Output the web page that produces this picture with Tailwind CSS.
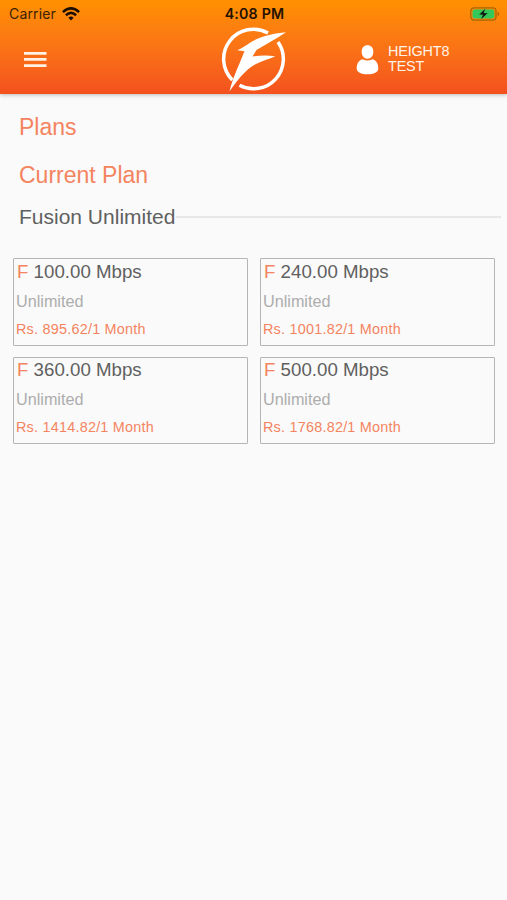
<!DOCTYPE html>
<html lang="en">
<head>
<meta charset="utf-8">
<title>Plans</title>
<script src="https://cdn.jsdelivr.net/npm/@tailwindcss/browser@4"></script>
</head>
<body class="h-[900px] w-[507px] overflow-hidden bg-[#fafafa] font-['Liberation_Sans',Arial,sans-serif] text-[#606060]">
<header class="flex h-[94px] flex-col bg-linear-to-b from-[#ff9100] to-[#f4511e] shadow-[0_1px_4px_rgba(0,0,0,0.25)]">
  <div class="grid h-[27px] shrink-0 grid-cols-3 items-center pr-[7px] pl-[9px] font-['Inter',sans-serif] text-[#3b2105]">
    <div class="flex items-center gap-[6px]">
      <span class="text-[14px] leading-[26px] tracking-[0.15px]">Carrier</span>
      <svg class="h-[14px] w-[18px]" viewBox="0 0 18 14" fill="none" stroke="#1c0f00" stroke-width="2.5"><path d="M.9 5.1Q9-2.3 17.1 5.1M3.9 8.2q5.1-4.6 10.2 0"/><path d="M6.4 10.7q2.6-2.2 5.2 0L9 13.4z" fill="#1c0f00" stroke="none"/></svg>
    </div>
    <div class="text-center text-[14.2px] leading-[26px] font-semibold tracking-[0.2px] text-[#241200]">4:08 PM</div>
    <svg class="h-[14px] w-[30px] justify-self-end" viewBox="0 0 30 14"><rect x=".8" y=".8" width="25.2" height="12.4" rx="3.4" fill="none" stroke="#a86500" stroke-width="1.3"/><rect x="2.5" y="2.4" width="21.8" height="9.2" rx="2" fill="#34c759"/><path d="M27.6 4.6q3.4 2.4 0 4.8z" fill="#a86500"/><path d="M15.3 1.5 9 7.7h3.8l-1.8 4.9 6.800-6.500h-4z" fill="#111" stroke="#34c759" stroke-width=".3"/></svg>
  </div>
  <div class="grid flex-1 grid-cols-[221px_135px_1fr] items-start">
    <svg class="mt-[24px] ml-[24px] h-[17px] w-[23px]" viewBox="0 0 23 17" fill="#fff2e4"><path d="M0 1h22.5v2.7H0zM0 7.1h22.5v2.7H0zM0 13.2h22.5v2.7H0z"/></svg>
    <svg class="h-[66px] w-[66px]" viewBox="0 0 66 66" fill="#fff"><path d="M47 6A29.8 29.8 0 0 0 11.3 53" fill="none" stroke="#fff" stroke-width="3.5"/><path d="M57 15A29.8 29.8 0 0 1 18.5 58.3" fill="none" stroke="#fff" stroke-width="3.5"/><path d="M65 5.2C51 6.5 36 10 26.5 17.5C22.5 20.2 19 22 16.3 23.300L23.500 24.200C18 38 12.500 49 8.400 64.400C16 54 24 43 34 37.500C40.500 34 47 32.500 54.300 29.200C46.500 28.200 39.500 28.300 31.500 29.500L35.500 23C46 16.500 55 12 65 5.200z"/></svg>
    <div class="flex items-start gap-[9px] pt-[17px]">
      <svg class="mt-[1px] h-[30px] w-[23px]" viewBox="0 0 23 30" fill="#fff"><path d="M11.5.3c3.7 0 5.8 2.6 5.8 6.5 0 3.8-2.2 7-5.8 7s-5.8-3.2-5.8-7C5.7 2.9 7.8.3 11.5.3z"/><path d="M6.5 14.2q5 2.7 10 0c4 1.2 5.8 4.6 5.8 9.2 0 3.9-4.6 5.8-10.8 5.8S.7 27.3.7 23.4c0-4.6 1.8-8 5.8-9.2z"/></svg>
      <div class="text-[14.4px] leading-[15px] tracking-[-0.15px] text-[#fff3e8]">HEIGHT8<br>TEST</div>
    </div>
  </div>
</header>
<main>
  <h1 class="mt-[18px] ml-[19px] text-[23px] leading-[30px] text-[#f4845f]">Plans</h1>
  <h2 class="mt-[18px] ml-[19px] text-[23px] leading-[30px] text-[#f4845f]">Current Plan</h2>
  <div class="mt-[14px] mr-[6px] ml-[19px] flex h-[26px] items-center gap-[1px]">
    <h3 class="text-[21px] leading-[26px] whitespace-nowrap">Fusion Unlimited</h3>
    <div class="h-[2px] flex-1 bg-[#e7e7e7]"></div>
  </div>
  <section class="mt-[28px] ml-[12.5px] grid w-[482.5px] grid-cols-2 gap-x-[11.5px] gap-y-[11px]">
    <article class="h-[87.5px] rounded-[1px] border border-[#b5b5b5] pl-[2.5px]">
      <div class="pl-[1px] text-[18.7px] leading-[26px]"><span class="text-[#f4845f]">F</span> 100.00 Mbps</div>
      <div class="mt-[4px] text-[16.2px] leading-[24px] text-[#adadad]">Unlimited</div>
      <div class="mt-[6px] text-[14.4px] leading-[20px] tracking-[0.23px] text-[#f4845f]">Rs. 895.62/1 Month</div>
    </article>
    <article class="h-[87.5px] rounded-[1px] border border-[#b5b5b5] pl-[2.5px]">
      <div class="pl-[1px] text-[18.7px] leading-[26px]"><span class="text-[#f4845f]">F</span> 240.00 Mbps</div>
      <div class="mt-[4px] text-[16.2px] leading-[24px] text-[#adadad]">Unlimited</div>
      <div class="mt-[6px] text-[14.4px] leading-[20px] tracking-[0.23px] text-[#f4845f]">Rs. 1001.82/1 Month</div>
    </article>
    <article class="h-[87.5px] rounded-[1px] border border-[#b5b5b5] pl-[2.5px]">
      <div class="-mt-[0.5px] pl-[1px] text-[18.7px] leading-[26px]"><span class="text-[#f4845f]">F</span> 360.00 Mbps</div>
      <div class="mt-[4px] text-[16.2px] leading-[24px] text-[#adadad]">Unlimited</div>
      <div class="mt-[6px] text-[14.4px] leading-[20px] tracking-[0.23px] text-[#f4845f]">Rs. 1414.82/1 Month</div>
    </article>
    <article class="h-[87.5px] rounded-[1px] border border-[#b5b5b5] pl-[2.5px]">
      <div class="-mt-[0.5px] pl-[1px] text-[18.7px] leading-[26px]"><span class="text-[#f4845f]">F</span> 500.00 Mbps</div>
      <div class="mt-[4px] text-[16.2px] leading-[24px] text-[#adadad]">Unlimited</div>
      <div class="mt-[6px] text-[14.4px] leading-[20px] tracking-[0.23px] text-[#f4845f]">Rs. 1768.82/1 Month</div>
    </article>
  </section>
</main>
</body>
</html>
